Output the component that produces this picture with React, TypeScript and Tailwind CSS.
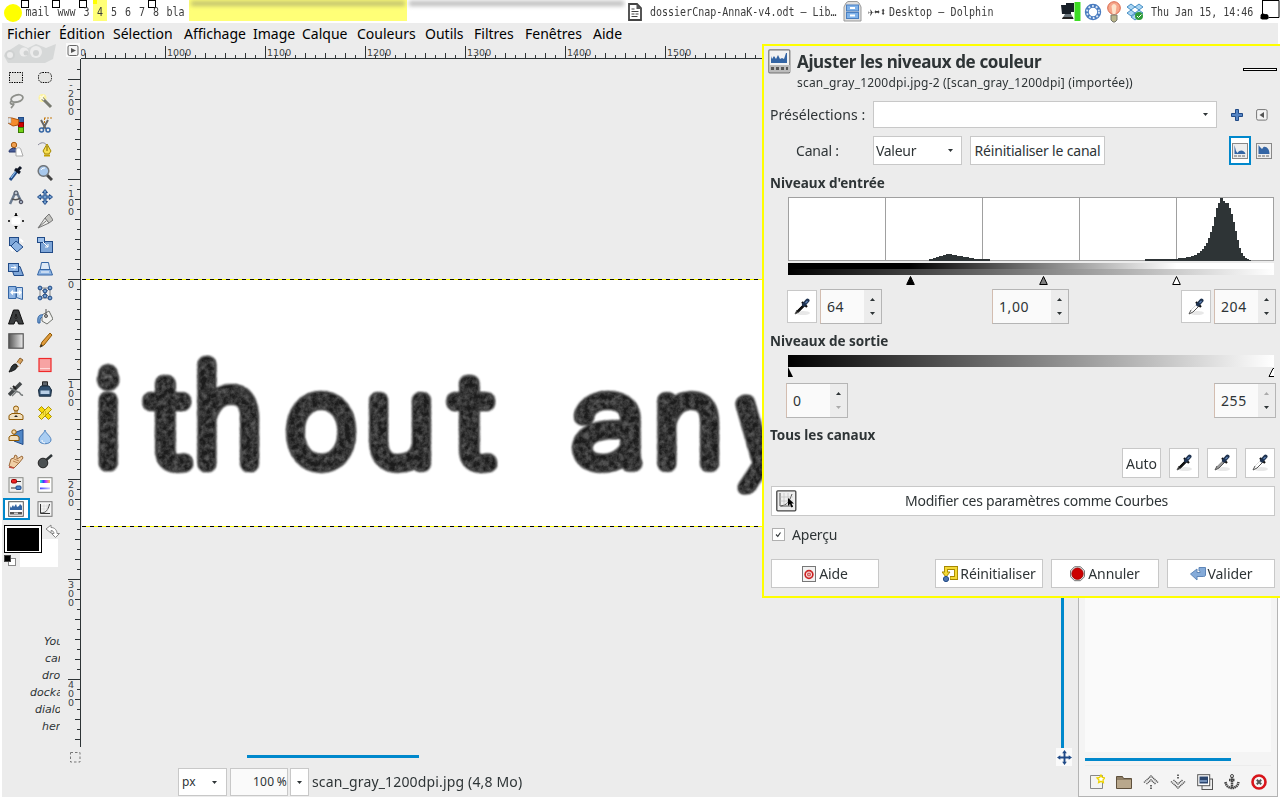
import React from "react";

type Kids = { children?: React.ReactNode };

const Ico = ({ children, s = 16 }: Kids & { s?: number }) => (
  <svg width={s} height={s} viewBox="0 0 16 16" fill="none" className="shrink-0">{children}</svg>
);

const B = "#7ea6d8";
const D = "#204a87";

const tools: React.ReactNode[] = [
  <g><rect x="1.500" y="3.500" width="13" height="10" fill="#e4e4e2" /><rect x="1.500" y="3.500" width="13" height="10" fill="none" stroke="#000" strokeDasharray="1.500 1" /></g>,
  <rect x="1.500" y="3.500" width="13" height="10" rx="4" fill="#e4e4e2" stroke="#000" strokeDasharray="1.500 1" />,
  <g stroke="#8d8f8a" strokeWidth="1.800"><ellipse cx="9" cy="5.500" rx="6" ry="3.500" transform="rotate(-15 9 5.500)" /><path d="M4 8c-3 1-1 4 1 3s0 2-2 4" /><path d="M4 9h5" strokeWidth="1" /></g>,
  <g><circle cx="5.500" cy="5" r="4" fill="#fcf3a0" /><path d="M5 5l9 9" stroke="#77796f" strokeWidth="3" /><path d="M3 3l4 4M7 2L3 7" stroke="#fffbe0" strokeWidth="1.500" /></g>,
  <g><rect x="10.500" y="0.500" width="5" height="5" fill="#3465a4" stroke={D} /><rect x="10.500" y="5.500" width="5" height="5" fill="#cc0000" stroke="#800" /><rect x="10.500" y="10.500" width="5" height="5" fill="#73d216" stroke="#387a05" /><path d="M0 1h4l7 2-1 5-5 1-5-3z" fill="#f58b2a" stroke="#b0560c" /><path d="M0 1h3v5H0z" fill="#eee" stroke="#999" strokeWidth=".6" /></g>,
  <g><path d="M4 3l5 9M11 3L6 12" stroke="#666" strokeWidth="2" /><circle cx="4.500" cy="13" r="2" stroke="#3465a4" strokeWidth="1.500" /><circle cx="11" cy="13" r="2" stroke="#3465a4" strokeWidth="1.500" /><path d="M7.500 1v6M7 1h9" stroke="#c47b11" strokeDasharray="2 1" /></g>,
  <g><circle cx="6" cy="4" r="2.700" fill="#f0a050" stroke="#a65b12" /><path d="M1 11c0-5 9-5 9 0z" fill="#4a5f9a" stroke="#27366b" /><path d="M8 15V9c0-3 5-3 5 0l2 6z" fill="#fff" stroke="#aaa" /></g>,
  <g><path d="M1 4c4-4 8-2 9 1" stroke="#889" /><path d="M10 3l4 7-2 3H8L6 10z" fill="#f7df52" stroke="#a58700" /><path d="M7 14.500h6" stroke="#c4a000" strokeWidth="2" /><path d="M10 5v5" stroke="#806600" /></g>,
  <g><path d="M2 15l7-9" stroke={D} strokeWidth="3" /><path d="M3 13l5-7" stroke="#8fc0f0" strokeWidth="1.200" /><path d="M7 4l5 4M9 6l4-4" stroke="#111827" strokeWidth="3" /></g>,
  <g><path d="M10 10l5 5" stroke="#444" strokeWidth="3" /><circle cx="6.500" cy="6" r="5.300" fill="#a8c8ec" stroke="#71767b" strokeWidth="1.500" /><path d="M4 5c1-2 3-2 4-2" stroke="#fff" /></g>,
  <g><path d="M8 2L2 15M8 2l5 10" stroke="#6c7c91" strokeWidth="2.500" /><circle cx="8" cy="4" r="2" fill="#bbc3cf" stroke="#444d5a" /><path d="M4 10c3 1 6 1 8-1" stroke="#555" strokeWidth="1.500" /><circle cx="13" cy="13" r="1.800" fill="#9aa5b8" stroke="#445" /></g>,
  <path d="M8 0.500L10.500 3.500H9v3.500h3.500V5.500L15.500 8l-3 2.500V9H9v3.500h1.500L8 15.500l-2.500-3H7V9H3.500v1.500L0.500 8l3-2.500V7H7V3.500H5.500z" fill="#729fcf" stroke={D} strokeWidth="1" />,
  <g><rect x="3.500" y="4.500" width="9" height="7" fill="#fff" rx="1" /><path d="M8 0v3M8 13v3M0 8h2M14 8h2" stroke="#000" strokeWidth="1.500" /><path d="M6 3h4L8 1zM6 13h4L8 15z" fill="#000" /></g>,
  <g><path d="M1 15L8 5l4 5z" fill="#ecece9" stroke="#777" /><path d="M8 5l4-4 4 6-4 3z" fill="#c4c4c0" stroke="#777" /><path d="M2 14l7-6" stroke="#777" /></g>,
  <g stroke={D}><rect x="1.500" y="0.500" width="9" height="8" fill={B} /><path d="M8 4l7 6-6 5-6-6z" fill="#8eb4e3" /><path d="M1 10l4 4M12 2l3 3" stroke="#fff" strokeWidth="2" /></g>,
  <g stroke={D}><rect x="3.500" y="4.500" width="12" height="11" fill={B} /><rect x="0.500" y="0.500" width="7" height="5" fill="#9dc0ea" /><path d="M6 5l5 5M11 7v3H8" stroke="#fff" /></g>,
  <g stroke={D}><path d="M3 5.500h9l3.500 9H6z" fill={B} /><rect x="0.500" y="2.500" width="10" height="8" fill="#8eb4e3" /><path d="M3 6.500h5M6 4.500l2 2-2 2" stroke="#fff" /></g>,
  <g stroke="#3465a4"><path d="M4.500 1.500h7l1.500 8h-10z" fill="#dfeaf6" /><path d="M2.500 8.500h11l2 5.500H0.500z" fill="#8eb4e3" /><path d="M4 11h8" stroke="#fff" /></g>,
  <g stroke="#3465a4"><path d="M.5 1.500H8v12H.5z" fill="#8eb4e3" /><path d="M8.500 2.500h6v12l-6-2z" fill="#c2d9f2" /><path d="M3 7.500h9M5 5.500l-2 2 2 2M11 5.500l2 2-2 2" stroke="#fff" strokeWidth="1.300" /></g>,
  <g><path d="M3 3h10v10H3zM3 3l10 10M13 3L3 13M8 3v10" stroke="#87898a" strokeWidth="1" />{[[3, 3], [13, 3], [3, 13], [13, 13], [8, 6], [8, 11]].map(([x, y]) => <circle key={x + "-" + y} cx={x} cy={y} r="1.900" fill="#729fcf" stroke={D} />)}</g>,
  <path d="M5.500 1h5L15.500 15h-5l-1-3H7l-1 3H.5zM7 9h2L8 5z" fill="#3b3d3e" stroke="#111" />,
  <g><path d="M5 6l7-4 4 8-6 5-5-3z" fill="#f1f1ef" stroke="#70736e" /><path d="M6 6c-4-1-6 2-5 8h2c0-3 0-5 2-6" fill="#729fcf" stroke="#3465a4" /><path d="M9 0v7" stroke="#555" /><circle cx="9" cy="7" r="1.500" fill="#aaa" stroke="#555" /></g>,
  <g><defs><linearGradient id="tg"><stop stopColor="#555" /><stop offset="1" stopColor="#eee" /></linearGradient></defs><rect x="0.800" y="0.800" width="14.400" height="14.400" fill="url(#tg)" stroke="#555" strokeWidth="1.200" /></g>,
  <g><path d="M3 14L5 9l8-9 2 2-8 10z" fill="#e09b3d" stroke="#8f5902" /><path d="M3 14.500L4 11l2 2z" fill="#333" /></g>,
  <g><path d="M7 8l5-7 3 2-5 7z" fill="#d6a05c" stroke="#8b6230" /><path d="M8 6l4 3" stroke="#ddd" strokeWidth="2.500" /><path d="M9 8c1 4-4 6-8 7 2-3 2-7 6-8z" fill="#2e3436" stroke="#111" /></g>,
  <g><rect x="2" y="1.500" width="12" height="13" fill="#f7a3a3" stroke="#ef2929" strokeWidth="1.200" /><path d="M3 11.500h10" stroke="#ffdada" /></g>,
  <g><path d="M1 14L13 2" stroke="#44484a" strokeWidth="3.500" /><path d="M2 7l8 4c3 0 2 4 5 3M4 15l5-5" stroke="#777b7c" strokeWidth="1.500" /><path d="M5 5l3 3" stroke="#222" strokeWidth="2" /></g>,
  <g><path d="M5.500 .8h5v4h-5z" fill="#5d646b" stroke="#222" /><path d="M4 5h8l2.500 4-.8 6.200H2.300L1.500 9z" fill="#31506f" stroke="#1a2c3f" /><path d="M3.500 9.500h9v3.500h-9z" fill="#b9cfe6" /></g>,
  <g><circle cx="8" cy="3.500" r="2.500" fill="#f5d9a8" stroke="#8f5902" /><path d="M7 6v3M9 6v3" stroke="#8f5902" /><path d="M1 14.500v-4l3-2h8l3 2v4z" fill="#f0dfbe" stroke="#8f5902" /><path d="M8 10l2 2H6z" fill="#222" /></g>,
  <g stroke="#b19500"><path d="M1.500 4.500L4.500 1.500l10 10-3 3z" fill="#f5d90a" strokeWidth="1" strokeLinejoin="round" /><path d="M11.500 1.500l3 3-10 10-3-3z" fill="#f9e43c" strokeLinejoin="round" strokeWidth="1" /><path d="M6 7h4M6 9h4" strokeDasharray="1 1" /></g>,
  <g><path d="M6 4l9-3.500v15L6 12z" fill="#4f86c6" stroke={D} /><circle cx="6" cy="3" r="2.200" fill="#f5d9a8" stroke="#8f5902" /><path d="M1 11.500V8l2-1.500h6L11 8v3.500z" fill="#f0dfbe" stroke="#8f5902" /></g>,
  <g><path d="M8 1c1 4 6 6 6 10 0 5-12 5-12 0 0-4 5-6 6-10z" fill="#a9cdf2" stroke="#5083bd" /><path d="M5 11c0 2 1 3 3 3" stroke="#fff" /></g>,
  <g><path d="M1 13L3 6l3-1 1-3 2 1v3l5-3 1 2-4 5-5 5z" fill="#f0cfa5" stroke="#9b6a3a" /><path d="M5 8l5 2M6 6l5 2" stroke="#b98250" /><path d="M1 14l5 1" stroke="#c14b3b" strokeWidth="1.500" /></g>,
  <g><path d="M8 8l7-6" stroke="#2e3436" strokeWidth="2.500" /><circle cx="6" cy="10" r="4.800" fill="#4b5052" stroke="#222" /></g>,
  <g><rect x="1" y="0.700" width="14" height="14.600" fill="#f0f0ef" stroke="#888a85" /><path d="M3 4.500h10M3 11h10" stroke="#333" /><rect x="3.500" y="2.500" width="5" height="3.500" rx="1" fill="#e22" stroke="#900" /><rect x="8" y="9" width="5" height="3.500" rx="1" fill="#4f86c6" stroke={D} /></g>,
  <g><defs><linearGradient id="hue"><stop stopColor="#2fc" /><stop offset=".35" stopColor="#34f" /><stop offset=".6" stopColor="#c3f" /><stop offset="1" stopColor="#fc3" /></linearGradient><linearGradient id="vio"><stop stopColor="#44f" /><stop offset="1" stopColor="#ccf" /></linearGradient></defs><rect x="1" y="0.700" width="14" height="14.600" fill="#fff" stroke="#888a85" /><rect x="3" y="3" width="10" height="3" fill="url(#hue)" /><rect x="3" y="10.500" width="10" height="1.800" fill="url(#vio)" /></g>,
  <g><rect x="0.700" y="0.700" width="14.600" height="14.600" fill="#fff" stroke="#555" /><path d="M2 9V5l1 2 2-3 1 2 2-3 1 3 2-1 1-2 2 2v4z" fill="#3465a4" /><rect x="2" y="11" width="12" height="2.500" fill="#555" /><path d="M6 12.200h4" stroke="#fff" /></g>,
  <g><rect x="1" y="0.700" width="14" height="14.600" fill="#f4f4f4" stroke="#777" /><path d="M3.500 3v9.500H13M4 12c5 0 7-3 8.500-9" stroke="#333" /><path d="M4 5h8M4 8h8M7 3v9M10 3v9" stroke="#ccc" strokeWidth=".5" /></g>,
];

const TagMark = () => <i className="absolute top-0 -left-px block h-[8px] w-[8px] border border-black bg-white" />;

const Mono = ({ children, cls = "" }: Kids & { cls?: string }) => (
  <span className={"block origin-center scale-y-[1.200] whitespace-pre font-['DejaVu_Sans_Mono',monospace] text-[10px] leading-[23px] text-[#3c3c3c] " + cls}>{children}</span>
);

const tags: [string, string, boolean][] = [
  ["mail", "w-[31px]", true], ["www", "w-[27px]", true], ["3", "w-[13px]", true], ["4", "w-[14px]", false],
  ["5", "w-[14px]", false], ["6", "w-[14px]", false], ["7", "w-[14px]", false], ["8", "w-[14px]", true], ["bla", "w-[25px]", false],
];

const TopBar = () => (
  <header className="flex h-[23px] shrink-0 bg-white">
    <div className="flex w-[189px] items-start pl-[4px]">
      <i className="mt-[4px] h-[18px] w-[18px] shrink-0 rounded-full bg-[#ff0]" />
      {tags.map(([t, w, mark]) => (
        <div key={t} className={"relative flex h-[21px] shrink-0 justify-center " + w + (t === "4" ? " bg-[#ffff77]" : "")}>
          {mark && <TagMark />}
          {t === "4" && <i className="absolute top-0 left-0 h-[4px] w-[4px] bg-[#ff0]" />}
          <Mono>{t}</Mono>
        </div>
      ))}
    </div>
    <div className="h-[21px] w-[218px] overflow-hidden bg-[#ffff77]"><div className="mx-[2px] mt-px h-[5px] bg-[#99996a]/60 blur-[2px]" /></div>
    <div className="h-[21px] w-[219px] overflow-hidden"><div className="mx-[2px] mt-px h-[5px] bg-[#aaa]/80 blur-[2px]" /></div>
    <div className="flex w-[24px] items-center pl-px">
      <svg width="16" height="18" viewBox="0 0 15 18"><path d="M1.500 1h8l4 4v12h-12z" fill="#fff" stroke="#444" strokeWidth="1.800" /><path d="M9 1v5h5" fill="#555" /><path d="M4 6h3M4 8.500h7M4 11h3M4 13.500h6M8 11h3" stroke="#444" strokeWidth="1.200" /></svg>
    </div>
    <div className="w-[193px]"><Mono>dossierCnap-AnnaK-v4.odt – Lib…</Mono></div>
    <div className="flex w-[25px] items-center">
      <svg width="19" height="21" viewBox="0 0 19 21"><path d="M3 2L5 .5h9L16 2l2 4v14H1V6z" fill="#dedede" stroke="#999" /><rect x="3.500" y="4" width="12" height="6" fill="#7fb2ea" stroke="#4a7fc0" /><rect x="3.500" y="11.500" width="12" height="6" fill="#7fb2ea" stroke="#4a7fc0" /><path d="M7 6h5v2H7zM7 13.500h5v2H7z" fill="#fff" /></svg>
    </div>
    <div className="flex w-[193px]"><Mono cls="w-[21px]">✈⬌⬍</Mono><Mono cls="tracking-[0.130px]">Desktop — Dolphin</Mono></div>
    <div className="flex w-[90px] items-center gap-[3px]">
      <svg width="20" height="21" viewBox="0 0 20 21"><path d="M5 2h8v9H5zM0 4h10v9H1z" fill="#182028" /><path d="M4 13h6l3 5H1z" fill="#6a757c" /><path d="M2 16h10v2H1z" fill="#222" /><path d="M13.500 1h6v19h-6z" fill="#3ddc24" /></svg>
      <svg width="18" height="20" viewBox="0 0 18 20"><circle cx="9" cy="10" r="6.200" fill="#fff" stroke="#4a7cc0" strokeWidth="4" /><circle cx="9" cy="10" r="6" fill="none" stroke="#dbe8f7" strokeWidth="1.800" strokeDasharray="1.800 2" /></svg>
      <svg width="18" height="22" viewBox="0 0 18 22"><circle cx="9" cy="7" r="6.300" fill="#f6a58a" stroke="#d9674a" /><path d="M6.500 5q2.500-4 5 0l-1 8H7.500z" fill="#fde3cb" /><path d="M6 14h6v5l-2 2H8l-2-2z" fill="#b9b58a" stroke="#77776c" /></svg>
      <svg width="18" height="20" viewBox="0 0 18 20"><path d="M1 5l4-3 4 3-4 3zM9 5l4-3 4 3-4 3zM1 11l4-3 4 3-4 3zM9 11l4-3 4 3-4 3zM5 15l4-3 4 3-4 3z" fill="#a9d5f4" stroke="#2678b5" strokeWidth=".8" /><circle cx="13" cy="14" r="4" fill="#2e9b3a" /><path d="M11 14l1.500 1.500 3-3" stroke="#fff" fill="none" /></svg>
    </div>
    <div className="w-[109px]"><Mono>Thu Jan 15, 14:46</Mono></div>
    <svg width="20" height="23" viewBox="0 0 20 23" className="shrink-0"><path d="M2.500 0v14M2 .5h17v17H9" fill="none" stroke="#000" strokeWidth="1" /><circle cx="3" cy="16" r="2.500" /><circle cx="6" cy="16.500" r="2.500" /><path d="M0 18l3-3h4l2 3-2 1.500H2z" /></svg>
  </header>
);

const menus: [string, string][] = [
  ["Fichier", "w-[52px]"], ["Édition", "w-[54px]"], ["Sélection", "w-[71px]"], ["Affichage", "w-[69px]"], ["Image", "w-[49px]"], ["Calque", "w-[55px]"],
  ["Couleurs", "w-[68px]"], ["Outils", "w-[49px]"], ["Filtres", "w-[51px]"], ["Fenêtres", "w-[68px]"], ["Aide", "w-[40px]"],
];

const Toolbox = () => (
  <aside className="flex w-[59px] shrink-0 flex-col">
    <svg width="57" height="21" viewBox="0 0 57 21"><path d="M3 10L17 1l9 4 8-4 10 4 10-4-3 15-8 4H6L2 13z" fill="#d6d8d8" /><circle cx="8" cy="12" r="4" fill="#ececec" stroke="#cfd1d1" strokeWidth="2" /><circle cx="22" cy="9" r="4.500" fill="#ececec" /><circle cx="34" cy="9" r="6" fill="#ececec" /><circle cx="24" cy="10" r="2.500" fill="#d0d2d2" /><circle cx="34" cy="10" r="3" fill="#d0d2d2" /></svg>
    <div className="mt-px grid grid-cols-[28px_30px]">
      {tools.map((t, i) => (
        <div key={i} className="flex h-[24px] items-center justify-center">
          <div className={i === 36 ? "flex h-[22px] w-[27px] items-center justify-center border-2 border-[#0088cc] bg-white" : ""}><Ico>{t}</Ico></div>
        </div>
      ))}
    </div>
    <svg width="59" height="46" viewBox="0 0 59 46" className="mt-[3px]"><rect x="18" y="15" width="38" height="28" fill="#fff" /><rect x="2.500" y="1.500" width="37" height="27" fill="#fff" stroke="#000" /><rect x="5" y="4" width="32" height="23" fill="#000" /><path d="M44 5l5-4v2.500c4 0 6 3 6 6h2.500l-4 4-4-4h2.500c0-2-1.500-3-3-3V9z" fill="#fff" stroke="#888" /><rect x="6.500" y="34.500" width="7" height="7" fill="#fff" stroke="#888" /><rect x="2.500" y="31.500" width="6" height="6" fill="#000" stroke="#444" /></svg>
    <div className="mt-[63px] w-[58px] overflow-hidden whitespace-nowrap font-['DejaVu_Sans',sans-serif] text-[11px] leading-[17px] text-[#2e3436] italic">
      <p className="pl-[42px]">You</p>
      <p className="pl-[43px]">can</p>
      <p className="pl-[40px]">drop</p>
      <p className="pl-[28px]">dockable</p>
      <p className="pl-[33px]">dialogs</p>
      <p className="pl-[40px]">here</p>
    </div>
  </aside>
);

const HRuler = () => (
  <svg width="681" height="16" viewBox="81 43 681 16" className="block" shapeRendering="crispEdges">
    <path d="M81 58.500h681" stroke="#2e3436" />
    {Array.from({ length: 68 }, (_, i) => {
      const x = 85 + i * 10;
      const top = (x - 165) % 100 === 0 ? 46 : (x - 165) % 20 === 0 ? 53 : 55;
      return <path key={x} d={`M${x + 0.5} ${top}V58`} stroke="#2e3436" />;
    })}
    <g fontFamily="DejaVu Sans, sans-serif" fontSize="9.500" fill="#3f4547">
      <text x="80" y="56">0</text>
      {[1000, 1100, 1200, 1300, 1400, 1500].map((n, i) => <text key={n} x={167 + i * 100} y="56">{n}</text>)}
    </g>
  </svg>
);

const VRuler = () => (
  <svg width="21" height="689" viewBox="61 59 21 689" className="block" shapeRendering="crispEdges">
    <path d="M80.500 59v688" stroke="#2e3436" />
    {Array.from({ length: 68 }, (_, i) => {
      const y = 69 + i * 10;
      const l = (y - 79) % 100 === 0 ? 68 : (y - 79) % 20 === 0 ? 75 : 77;
      return <path key={y} d={`M${l} ${y + 0.5}H80`} stroke="#2e3436" />;
    })}
    <g fontFamily="DejaVu Sans, sans-serif" fontSize="9.500" fill="#3f4547" textAnchor="middle">
      {["-200", "-100", "0", "100", "200", "300", "400"].map((s, i) =>
        s.split("").map((c, k) => <text key={s + k} x="71" y={79 + i * 100 + 9 + k * 9}>{c}</text>),
      )}
    </g>
  </svg>
);

/* scanned words: thin strokes fattened with round joins, then toner grain */
const letters: [string, number, string, string][] = [
  ["i", 107, "scale(1 1)", "Roboto"], ["t", 168, "scale(1.080 1)", "Roboto"], ["h", 227, "scale(1 1.100)", "Roboto"],
  ["o", 320, "scale(0.980 1)", "Roboto"], ["u", 399, "scale(1 1)", "Roboto"], ["t", 472, "scale(1.080 1)", "Roboto"],
  ["a", 608, "scale(1.080 1)", "Roboto"], ["n", 687, "scale(1 1)", "Roboto"], ["y", 761, "skewX(-10) scale(1.100 1.040)", "Lato"],
];

const Scan = () => (
  <svg width="681" height="248" viewBox="81 279 681 248" className="block">
    <defs>
      <filter id="toner" x="-5%" y="-5%" width="110%" height="110%" colorInterpolationFilters="sRGB">
        <feGaussianBlur in="SourceGraphic" stdDeviation="1.200" result="soft" />
        <feTurbulence type="fractalNoise" baseFrequency="0.180" numOctaves="3" seed="4" />
        <feColorMatrix values="0 0 0 0 .34  0 0 0 0 .34  0 0 0 0 .34  2 0 0 0 -.6" result="grain" />
        <feComposite in="grain" in2="soft" operator="in" result="g" />
        <feMerge><feMergeNode in="soft" /><feMergeNode in="g" /></feMerge>
      </filter>
    </defs>
    <rect x="81" y="279" width="681" height="248" fill="#fff" />
    <g filter="url(#toner)" fontWeight="100" fill="#1c1c1c" stroke="#1c1c1c" strokeWidth="15.500" strokeLinejoin="round" strokeLinecap="round" textAnchor="middle">
      <circle cx="107" cy="374" r="2" />
      {letters.map(([c, x, tf, f], i) => (
        <text key={i} fontSize="120" fontFamily={`${f}, sans-serif`} transform={`translate(${x} 464) ${tf}`}>{c}</text>
      ))}
    </g>
    <path d="M81 279.500h681M81 526.500h681" stroke="#ff0" />
    <path d="M81 279.500h681M81 526.500h681" stroke="#000" strokeDasharray="4 4" />
  </svg>
);

const Tri = ({ up = false, dim = false }: { up?: boolean; dim?: boolean }) => (
  <svg width="5" height="3" viewBox="0 0 5 3" className="shrink-0"><path d={up ? "M0 3L2.500 0L5 3z" : "M0 0h5L2.500 3z"} fill={dim ? "#aaa" : "#2e3436"} /></svg>
);

const StatusBar = () => (
  <div className="flex h-[29px] pl-[176px] text-[14px] text-[#2e3436]">
    <div className="flex h-[28px] w-[49px] items-center justify-between border border-[#c8c8c8] bg-white pr-[9px] pl-[3px]"><span className="text-[12px]">px</span><Tri /></div>
    <div className="ml-[3px] flex h-[28px] w-[58px] items-center justify-end border border-[#c8c8c8] bg-[#fafafa] text-[12px] tracking-[0.300px]">100&#8201;%</div>
    <div className="ml-[2px] flex h-[28px] w-[19px] items-center justify-center border border-[#c8c8c8] bg-white"><Tri /></div>
    <span className="ml-[3px] leading-[28px] tracking-[0.160px] whitespace-nowrap">scan_gray_1200dpi.jpg (4,8 Mo)</span>
  </div>
);

const Dock = () => (
  <aside className="mt-[4px] flex h-[750px] w-[200px] shrink-0 flex-col border border-[#b4b4b4] bg-[#f4f4f4] px-[6px]">
    <div className="grow bg-[#fafafa]" />
    <div className="h-[14px] border-b border-[#ececec] pt-[6px]"><div className="h-[3px] w-[146px] bg-[#0088cc]" /></div>
    <div className="flex h-[30px] items-center justify-between pt-px pr-[4px] pl-[4px]">
      <Ico><path d="M1.500 1.500h12v13h-12z" fill="#f4f4f2" stroke="#888" /><path d="M12 1l1.300 2.400 2.700.5-2 2 .4 2.600L12 7.300 9.600 8.500 10 6 8 4l2.700-.6z" fill="#fff" stroke="#edd400" strokeWidth="1.300" /></Ico>
      <Ico><path d="M.5 2.500h6l1 2h8v10H.5z" fill="#8f7f66" stroke="#5f513d" /><path d="M1 6h14v8H1z" fill="#b9a88c" /></Ico>
      <Ico><path d="M1 8.500l7-6.500 7 6.500M3.500 10l4.500-4 4.500 4" stroke="#555" strokeWidth="1.500" strokeDasharray="1.200 .6" /><path d="M8 11v4.500" stroke="#666" strokeWidth="2" strokeDasharray="1.500 1" /></Ico>
      <Ico><path d="M1 7.500l7 6.500 7-6.500M3.500 6l4.500 4 4.500-4" stroke="#555" strokeWidth="1.500" strokeDasharray="1.200 .6" /><path d="M8 .5V5" stroke="#666" strokeWidth="2" strokeDasharray="1.500 1" /></Ico>
      <Ico><rect x="5" y="5" width="10.500" height="10.500" fill="#eee" stroke="#555" /><rect x=".7" y=".7" width="12" height="11" fill="#fff" stroke="#555" /><rect x="2.500" y="2.500" width="8.500" height="7" fill="#2c466e" /><path d="M3 7h7" stroke="#8aa9d0" strokeWidth="1.500" /></Ico>
      <Ico><circle cx="8" cy="2" r="1.500" stroke="#444" /><path d="M8 3v11M5 6h6M1.500 8c1 8 12 8 13 0" stroke="#444" strokeWidth="2.500" strokeDasharray="1.500 .5" /></Ico>
      <Ico><circle cx="8" cy="8" r="6.500" fill="#f5f5f5" stroke="#d8151b" strokeWidth="2.600" /><path d="M5.800 5.800l4.400 4.400M10.200 5.800l-4.400 4.400" stroke="#555" strokeWidth="2" /></Ico>
    </div>
  </aside>
);

const Picker = ({ c }: { c: string }) => (
  <svg width="18" height="18" viewBox="0 0 18 18"><ellipse cx="10" cy="15" rx="7" ry="2" fill="#e8e8e8" /><path d="M2 16l2-4 6-6 2 2-6 6z" fill={c} stroke="#555" strokeWidth="1" /><path d="M4 12l5-5" stroke="#ddd" /><path d="M9 4l5 5" stroke="#111" strokeWidth="2.200" /><path d="M11 6.500l3.500-4" stroke="#1f3350" strokeWidth="4" strokeLinecap="round" /><path d="M12.500 5l2-2" stroke="#5f84b8" strokeWidth="1.300" /></svg>
);

const Btn = ({ children, cls }: Kids & { cls: string }) => (
  <div className={"flex shrink-0 items-center justify-center border border-[#c8c8c8] bg-white whitespace-nowrap " + cls}>{children}</div>
);

const Spin = ({ v, w, up = false, down = false }: { v: string; w: string; up?: boolean; down?: boolean }) => (
  <div className={"flex h-[35px] shrink-0 border border-[#b5b5b5] border-l-[#d3bdb0] " + w}>
    <span className="grow bg-[#fafafa] pl-[6px] text-[14px] leading-[34px] tracking-[0.600px]">{v}</span>
    <span className="flex w-[17px] flex-col items-center justify-between bg-[#ececec] py-[8px]"><Tri up dim={up} /><Tri dim={down} /></span>
  </div>
);

const Histogram = () => (
  <svg width="488" height="90" viewBox="0 0 488 90" className="block">
    <defs>
      <linearGradient id="lv"><stop offset=".25" stopColor="#000" /><stop offset=".525" stopColor="#7f7f7f" /><stop offset=".8" stopColor="#fff" /></linearGradient>
      <linearGradient id="full"><stop stopColor="#000" /><stop offset="1" stopColor="#fff" /></linearGradient>
    </defs>
    <g shapeRendering="crispEdges">
      <rect x=".5" y=".5" width="485" height="63" fill="#fff" stroke="#a0a0a0" />
      <path d="M97.500 0v64M194.500 0v64M291.500 0v64M388.500 0v64" stroke="#a0a0a0" />
      <path d="M141 64v-2h4v-1h3v-1h3v-1h4v-1h3v-1h6v1h5v1h6v1h6v1h5v1h16v2zM357 64v-2h33v-1h8v-1h5v-1h3v-1h3v-2h3v-2h2v-2h2v-3h2v-3h2v-5h2v-6h2v-6h2v-9h2v-9h2v-5h2V1h3v3h2v2h4v5h2v6h2v8h2v9h2v9h2v8h2v5h2v3h2v2h2v1h2v1h2v1z" fill="#2e3436" />
      <rect x="0" y="66" width="486" height="6" fill="url(#lv)" />
      <rect x="0" y="72" width="486" height="6" fill="url(#full)" />
    </g>
    <path d="M122.500 79.500l3.800 8h-7.600z" fill="#000" stroke="#000" />
    <path d="M255.500 79.500l3.800 8h-7.600z" fill="#7f7f7f" stroke="#000" />
    <path d="M388.500 79.500l3.800 8h-7.600z" fill="#fff" stroke="#000" />
  </svg>
);

const Dialog = () => (
  <section className="absolute top-[44px] left-[762px] flex h-[554px] w-[518px] flex-col border-y-2 border-l-2 border-[#ff0] bg-[#ececec] pl-[4px] text-[14px] text-[#2e3436]">
    <div className="flex h-[55px] shrink-0 pt-[2px]">
      <svg width="23" height="25" viewBox="0 0 23 25" className="mt-px"><rect x=".8" y=".8" width="21" height="23" rx="1" fill="#f2f2f2" stroke="#777" strokeWidth="1.200" /><path d="M3 14V7l1 3 2-3 2 3 2-4 2 4 2-1 2 1 2-6h1v10z" fill="#3465a4" /><path d="M1 16h21v7H1z" fill="#bbb" /><path d="M3 19.500h17" stroke="#555" strokeWidth="3" strokeDasharray="3 2" /></svg>
      <div className="ml-[6px] grow">
        <h1 className="text-[17px] leading-[27px] font-bold tracking-[-0.370px] whitespace-nowrap">Ajuster les niveaux de couleur</h1>
        <p className="text-[12px] leading-[16px] tracking-[0.190px] whitespace-nowrap">scan_gray_1200dpi.jpg-2 ([scan_gray_1200dpi] (importée))</p>
      </div>
      <div className="mt-[20px] mr-[3px] h-[3px] w-[34px] border border-black bg-white" />
    </div>
    <div className="flex h-[27px] shrink-0 items-center">
      <span className="w-[105px] pl-[2px] tracking-[0.040px] whitespace-nowrap">Présélections :</span>
      <Btn cls="h-[27px] w-[344px] !justify-end pr-[8px]"><Tri /></Btn>
      <svg width="14" height="14" viewBox="0 0 14 14" className="ml-[13px]"><path d="M5.500 1.500h3v4h4v3h-4v4h-3v-4h-4v-3h4z" fill="#5585c4" stroke={D} /></svg>
      <svg width="12" height="12" viewBox="0 0 12 12" className="ml-[12px]"><rect x=".6" y=".6" width="10.500" height="10.500" rx="1.500" fill="#f4f4f4" stroke="#777" /><path d="M8 3v6L3.500 6z" fill="#555" /></svg>
    </div>
    <div className="mt-[8px] flex h-[29px] shrink-0 items-center">
      <span className="w-[105px] pl-[28px] tracking-[-0.200px]">Canal :</span>
      <Btn cls="h-[29px] w-[89px] !justify-between pl-[2px] pr-[8px]"><span className="tracking-[-0.300px]">Valeur</span><Tri /></Btn>
      <Btn cls="ml-[8px] h-[29px] w-[135px] tracking-[-0.190px]">Réinitialiser le canal</Btn>
      <div className="ml-[124px] flex h-[29px] w-[22px] items-center justify-center border-2 border-[#0088cc] bg-white"><Ico><rect x=".5" y=".5" width="15" height="15" fill="#eee" stroke="#888" /><path d="M2.500 2v9h11c-1-4-6-5-8-1L4 8z" fill="#3465a4" /><path d="M2 13h12" stroke="#666" strokeDasharray="3 1" /></Ico></div>
      <div className="ml-[5px]"><Ico><rect x=".5" y=".5" width="15" height="15" fill="#eee" stroke="#888" /><path d="M2.500 2v9h11c0-5-3-8-6-7L6 6 4 4z" fill="#3465a4" /><path d="M2 13h12" stroke="#666" strokeDasharray="3 1" /></Ico></div>
    </div>
    <h2 className="h-[32px] shrink-0 pl-[2px] text-[13.500px] leading-[37px] font-bold">Niveaux d'entrée</h2>
    <div className="h-[92px] shrink-0 pl-[20px]"><Histogram /></div>
    <div className="flex h-[35px] shrink-0 items-center pl-[19px]">
      <Btn cls="h-[33px] w-[30px]"><Picker c="#111" /></Btn>
      <div className="ml-[3px]"><Spin v="64" w="w-[62px]" /></div>
      <div className="ml-[110px]"><Spin v="1,00" w="w-[77px]" /></div>
      <div className="ml-[112px]"><Btn cls="h-[33px] w-[30px]"><Picker c="#fff" /></Btn></div>
      <div className="ml-[3px]"><Spin v="204" w="w-[62px]" /></div>
    </div>
    <h2 className="h-[31px] shrink-0 pl-[2px] text-[13.500px] leading-[35px] font-bold">Niveaux de sortie</h2>
    <div className="h-[28px] shrink-0 pl-[20px]">
      <svg width="486" height="22" viewBox="0 0 486 22" className="block"><rect width="486" height="12" fill="url(#full)" /><path d="M0 12l5 10H0z" /><path d="M486 13.500h-1l-4 8h5" fill="#fff" stroke="#000" /></svg>
    </div>
    <div className="flex h-[35px] shrink-0 justify-between pr-[4px] pl-[18px]"><Spin v="0" w="w-[62px]" down /><Spin v="255" w="w-[62px]" up /></div>
    <h2 className="h-[30px] shrink-0 pl-[2px] text-[13.500px] leading-[35px] font-bold">Tous les canaux</h2>
    <div className="flex h-[30px] shrink-0 justify-end gap-[8px] pr-[5px]">
      <Btn cls="h-[30px] w-[39px]">Auto</Btn>
      <Btn cls="h-[30px] w-[30px]"><Picker c="#111" /></Btn>
      <Btn cls="h-[30px] w-[30px]"><Picker c="#999" /></Btn>
      <Btn cls="h-[30px] w-[30px]"><Picker c="#fff" /></Btn>
    </div>
    <div className="mt-[8px] ml-[3px] flex h-[30px] w-[504px] shrink-0 items-center border border-[#c8c8c8] bg-white pl-[4px]">
      <svg width="21" height="22" viewBox="0 0 21 22"><rect x=".8" y=".8" width="19" height="20" rx="1" fill="#eee" stroke="#444" strokeWidth="1.300" /><path d="M4 3v13h13M5 16c6-1 8-4 11-12" fill="none" stroke="#555" /><path d="M4 7h13M4 11h13M8 3v13M12 3v13" stroke="#bbb" strokeWidth=".6" /><path d="M12 8v8l2-2 1.500 3.500 1.500-.8-1.500-3.200h2.500z" fill="#000" /></svg>
      <span className="grow pl-[2px] text-center leading-[26px] tracking-[-0.230px]">Modifier ces paramètres comme Courbes</span>
    </div>
    <div className="flex h-[43px] shrink-0 items-start pt-[9px] pl-[4px]">
      <svg width="13" height="13" viewBox="0 0 13 13" className="mt-[3px]"><rect x=".5" y=".5" width="12" height="12" fill="#fff" stroke="#b0b0b0" /><path d="M4 6.500l1.800 1.800 2.700-3.800" fill="none" stroke="#2e3436" strokeWidth="1.100" /></svg>
      <span className="ml-[7px] leading-[20px] tracking-[-0.200px]">Aperçu</span>
    </div>
    <div className="flex h-[29px] shrink-0 gap-[8px] pl-[3px] tracking-[-0.100px]">
      <Btn cls="mr-[48px] h-[29px] w-[108px] gap-[3px]"><svg width="14" height="16" viewBox="0 0 14 16"><rect x=".5" y=".5" width="13" height="15" fill="#f2f2f2" stroke="#777" /><circle cx="7" cy="8.500" r="3.800" fill="#fff" stroke="#c22" strokeWidth="1.800" /><circle cx="7" cy="8.500" r="1.500" fill="none" stroke="#c22" /><path d="M4 5.500l6 6M10 5.500l-6 6" stroke="#c66" strokeWidth=".7" /></svg>Aide</Btn>
      <Btn cls="h-[29px] w-[108px] gap-[2px]"><svg width="16" height="16" viewBox="0 0 16 16"><path d="M4 9V2h10v10H8" fill="none" stroke="#a58700" strokeWidth="4" /><path d="M0 6h8L4 11z" fill="#f4d936" stroke="#a58700" /><path d="M4 8V2h10v10H8.500" fill="none" stroke="#f4d936" strokeWidth="2.200" /><circle cx="4" cy="13" r="2.600" fill="#4f76b0" stroke={D} /></svg>Réinitialiser</Btn>
      <Btn cls="h-[29px] w-[108px] gap-[3px]"><svg width="15" height="16" viewBox="0 0 15 16"><path d="M4.500.7h6l4 4v6l-4 4h-6l-4-4v-6z" fill="#ddd" stroke="#777" /><circle cx="7.500" cy="7.700" r="5.600" fill="#cc0000" stroke="#a00" /></svg>Annuler</Btn>
      <Btn cls="h-[29px] w-[108px] gap-[2px]"><svg width="16" height="16" viewBox="0 0 16 16"><path d="M9 1.500h6.500V9c0 1-1 1.500-2 1.500H7V14L.5 8 7 3v3.500h3c1 0 .5-1.500-1-1.500z" fill="#85abd9" stroke="#5f86b8" /></svg>Valider</Btn>
    </div>
  </section>
);

export default function App() {
  return (
    <div className="relative flex h-[800px] w-[1280px] flex-col overflow-hidden bg-white font-['Noto_Sans','Open_Sans',sans-serif]">
      <TopBar />
      <div className="mr-[2px] ml-[2px] flex h-[774px] flex-col bg-[#ececec]">
        <nav className="flex h-[20px] shrink-0 pl-[5px] text-[14px] leading-[22px] text-black">
          {menus.map(([m, w]) => <span key={m} className={"shrink-0 whitespace-nowrap " + w}>{m}</span>)}
        </nav>
        <div className="flex h-[754px]">
          <Toolbox />
          <main className="flex grow flex-col">
            <div className="flex h-[16px] shrink-0">
              <div className="flex w-[20px] items-start pl-[5px]"><svg width="14" height="14" viewBox="0 0 14 14"><rect width="14" height="14" fill="#fafafa" /><rect x="2" y="2.500" width="10" height="10" rx="1.500" fill="#f4f4f4" stroke="#666" /><path d="M5 5v5l5-2.500z" fill="#555" /></svg></div>
              <HRuler />
            </div>
            <div className="flex h-[689px] shrink-0">
              <VRuler />
              <div className="w-[680px] overflow-hidden pt-[220px]"><Scan /></div>
              <div className="flex grow justify-end pt-[538px] pr-[14px]"><div className="h-[151px] w-[3px] bg-[#0088cc]" /></div>
            </div>
            <div className="flex h-[20px] shrink-0 items-start pl-[9px]">
              <svg width="11" height="11" viewBox="0 0 11 11" className="mt-[4px]"><rect x=".5" y=".5" width="9.500" height="9.500" fill="none" stroke="#777" strokeDasharray="2.500 2" /></svg>
              <div className="mt-[7px] ml-[166px] h-[3px] w-[172px] bg-[#0088cc]" />
              <div className="mr-[6px] ml-auto flex h-[18px] w-[16px] items-center justify-center bg-[#fafafa]"><Ico s={15}><path d="M8 0L10.500 3.500H9v3.500h3.500V5.500L16 8l-3.500 2.500V9H9v3.500h1.500L8 16l-2.500-3.500H7V9H3.500v1.500L0 8l3.500-2.500V7H7V3.500H5.500z" fill={D} /></Ico></div>
            </div>
            <div className="-ml-[59px]"><StatusBar /></div>
          </main>
          <Dock />
        </div>
      </div>
      <Dialog />
    </div>
  );
}
